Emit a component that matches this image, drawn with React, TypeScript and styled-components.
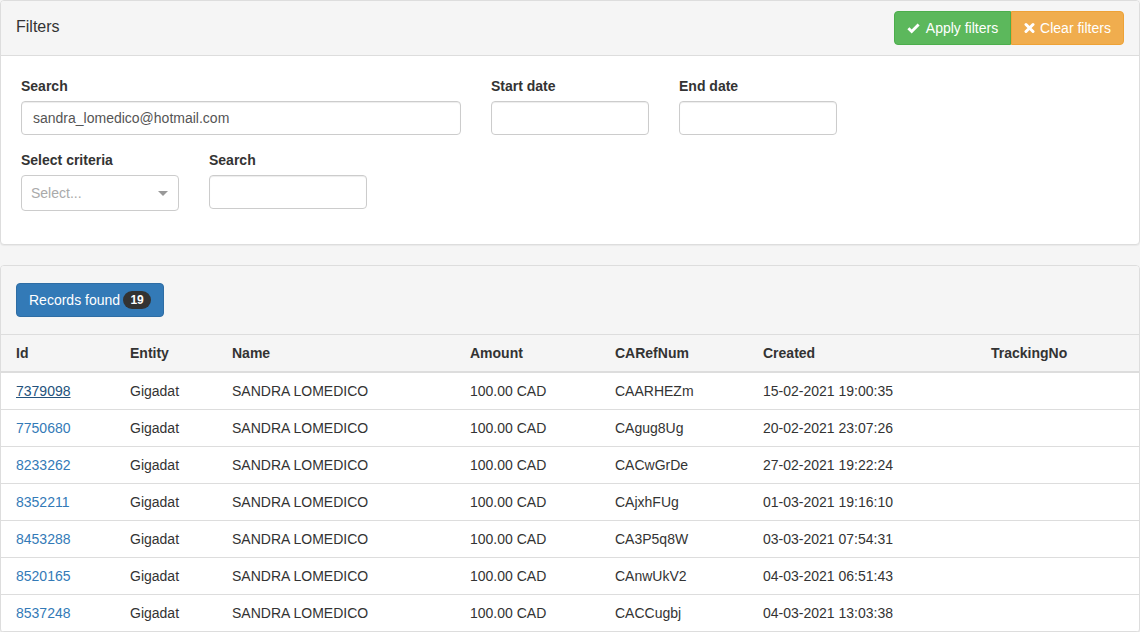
import React from 'react';
import styled, { createGlobalStyle } from 'styled-components';

const Global = createGlobalStyle`
  * { box-sizing: border-box; }
  html, body { margin: 0; padding: 0; background: #f5f5f5; overflow: hidden; }
  body { font-family: "Liberation Sans", Arial, sans-serif; font-size: 14px; line-height: 20px; color: #333; }
`;

const Page = styled.div`
  width: 1140px;
  display: flex;
  flex-direction: column;
  gap: 20px;
`;

const Panel = styled.section`
  background: #fff;
  border: 1px solid #ddd;
  border-radius: 4px;
  box-shadow: 0 1px 1px rgba(0, 0, 0, 0.05);
  overflow: hidden;
`;

const FilterHeading = styled.header`
  height: 55px;
  padding: 10px 15px 0;
  display: flex;
  justify-content: space-between;
  background: #f5f5f5;
  border-bottom: 1px solid #ddd;
`;

const PanelTitle = styled.h3`
  margin: 6px 0 0;
  font-size: 16px;
  font-weight: 400;
  line-height: 20px;
  color: #333;
`;

const ButtonGroup = styled.div`
  display: flex;
  height: 34px;
`;

const ActionButton = styled.button<{ $bg: string; $border: string; $side: 'left' | 'right'; $width: number }>`
  width: ${(p) => p.$width}px;
  display: flex;
  align-items: center;
  justify-content: center;
  gap: ${(p) => (p.$side === 'left' ? 6 : 5)}px;
  padding: 0;
  font: inherit;
  white-space: nowrap;
  color: #fff;
  background: ${(p) => p.$bg};
  border: 1px solid ${(p) => p.$border};
  border-radius: ${(p) => (p.$side === 'left' ? '4px 0 0 4px' : '0 4px 4px 0')};
  svg { flex: none; }
`;

const FilterBody = styled.div`
  height: 188px;
  padding: 20px 20px 0;
  display: flex;
  flex-direction: column;
`;

const FieldRow = styled.div`
  display: flex;
  gap: 30px;
  height: 74px;
`;

const Field = styled.div<{ $width: number }>`
  width: ${(p) => p.$width}px;
  display: flex;
  flex-direction: column;
`;

const Label = styled.label`
  font-weight: 700;
  font-size: 14px;
  line-height: 20px;
  margin-bottom: 5px;
  color: #333;
`;

const Input = styled.input`
  width: 100%;
  height: 34px;
  padding: 6px 11px;
  font: inherit;
  color: #555;
  background: #fff;
  border: 1px solid #ccc;
  border-radius: 4px;
  box-shadow: inset 0 1px 1px rgba(0, 0, 0, 0.075);
  outline: none;
`;

const SelectBox = styled.div`
  height: 36px;
  padding: 0 10px 0 9px;
  display: flex;
  align-items: center;
  justify-content: space-between;
  background: #fff;
  border: 1px solid #ccc;
  border-radius: 4px;
`;

const Placeholder = styled.span`
  color: #aaa;
`;

const Caret = styled.span`
  width: 0;
  height: 0;
  border-style: solid;
  border-width: 5px 5px 0;
  border-color: #999 transparent transparent;
`;

const RecordsHeading = styled.header`
  height: 69px;
  padding: 17px 15px 0;
  background: #f5f5f5;
  border-bottom: 1px solid #ddd;
`;

const PrimaryButton = styled.button`
  width: 148px;
  height: 34px;
  display: flex;
  align-items: center;
  gap: 3px;
  padding: 0 12px;
  font: inherit;
  white-space: nowrap;
  color: #fff;
  background: #337ab7;
  border: 1px solid #2e6da4;
  border-radius: 4px;
`;

const Badge = styled.span`
  flex: none;
  width: 28px;
  padding: 3px 0;
  text-align: center;
  font-size: 12px;
  font-weight: 700;
  line-height: 12px;
  color: #fff;
  background: #333;
  border-radius: 10px;
`;

const Table = styled.table`
  width: 1138px;
  table-layout: fixed;
  border-collapse: separate;
  border-spacing: 0;
`;

const HeadRow = styled.tr`
  background: #f5f5f5;
  height: 38px;
`;

const Th = styled.th<{ $width: number }>`
  width: ${(p) => p.$width}px;
  padding: 8px 8px 8px 15px;
  text-align: left;
  font-weight: 700;
  color: #333;
  border-bottom: 2px solid #ddd;
`;

const Tr = styled.tr`
  height: 37px;
`;

const Td = styled.td`
  padding: 8px 8px 8px 15px;
  color: #333;
  border-bottom: 1px solid #ddd;
  white-space: nowrap;
`;

const IdLink = styled.a<{ $active?: boolean }>`
  color: ${(p) => (p.$active ? '#23527c' : '#337ab7')};
  text-decoration: ${(p) => (p.$active ? 'underline' : 'none')};
`;

const CheckIcon = () => (
  <svg width="13" height="12" viewBox="0 0 13 12" aria-hidden="true">
    <path d="M1.4 6.2 L4.7 9.5 L11.6 2.5" fill="none" stroke="#fff" strokeWidth="2.9" />
  </svg>
);

const CrossIcon = () => (
  <svg width="11" height="12" viewBox="0 0 11 12" aria-hidden="true">
    <path d="M2 2.5 L9 9.5 M9 2.5 L2 9.5" fill="none" stroke="#fff" strokeWidth="3" strokeLinecap="round" />
  </svg>
);

const columns: [string, number][] = [
  ['Id', 114],
  ['Entity', 102],
  ['Name', 238],
  ['Amount', 145],
  ['CARefNum', 148],
  ['Created', 228],
  ['TrackingNo', 163],
];

const rows = [
  ['7379098', 'CAARHEZm', '15-02-2021 19:00:35'],
  ['7750680', 'CAgug8Ug', '20-02-2021 23:07:26'],
  ['8233262', 'CACwGrDe', '27-02-2021 19:22:24'],
  ['8352211', 'CAjxhFUg', '01-03-2021 19:16:10'],
  ['8453288', 'CA3P5q8W', '03-03-2021 07:54:31'],
  ['8520165', 'CAnwUkV2', '04-03-2021 06:51:43'],
  ['8537248', 'CACCugbj', '04-03-2021 13:03:38'],
];

export default function App() {
  return (
    <Page>
      <Global />
      <Panel>
        <FilterHeading>
          <PanelTitle>Filters</PanelTitle>
          <ButtonGroup>
            <ActionButton $bg="#5cb85c" $border="#4cae4c" $side="left" $width={117}>
              <CheckIcon /> Apply filters
            </ActionButton>
            <ActionButton $bg="#f0ad4e" $border="#eea236" $side="right" $width={113}>
              <CrossIcon /> Clear filters
            </ActionButton>
          </ButtonGroup>
        </FilterHeading>
        <FilterBody>
          <FieldRow>
            <Field $width={440}>
              <Label>Search</Label>
              <Input defaultValue="sandra_lomedico@hotmail.com" />
            </Field>
            <Field $width={158}>
              <Label>Start date</Label>
              <Input />
            </Field>
            <Field $width={158}>
              <Label>End date</Label>
              <Input />
            </Field>
          </FieldRow>
          <FieldRow>
            <Field $width={158}>
              <Label>Select criteria</Label>
              <SelectBox>
                <Placeholder>Select...</Placeholder>
                <Caret />
              </SelectBox>
            </Field>
            <Field $width={158}>
              <Label>Search</Label>
              <Input />
            </Field>
          </FieldRow>
        </FilterBody>
      </Panel>
      <Panel>
        <RecordsHeading>
          <PrimaryButton>
            Records found <Badge>19</Badge>
          </PrimaryButton>
        </RecordsHeading>
        <Table>
          <thead>
            <HeadRow>
              {columns.map(([name, width]) => (
                <Th key={name} $width={width}>{name}</Th>
              ))}
            </HeadRow>
          </thead>
          <tbody>
            {rows.map(([id, ref, created], i) => (
              <Tr key={id}>
                <Td><IdLink href="#" $active={i === 0}>{id}</IdLink></Td>
                <Td>Gigadat</Td>
                <Td>SANDRA LOMEDICO</Td>
                <Td>100.00 CAD</Td>
                <Td>{ref}</Td>
                <Td>{created}</Td>
                <Td />
              </Tr>
            ))}
          </tbody>
        </Table>
      </Panel>
    </Page>
  );
}
